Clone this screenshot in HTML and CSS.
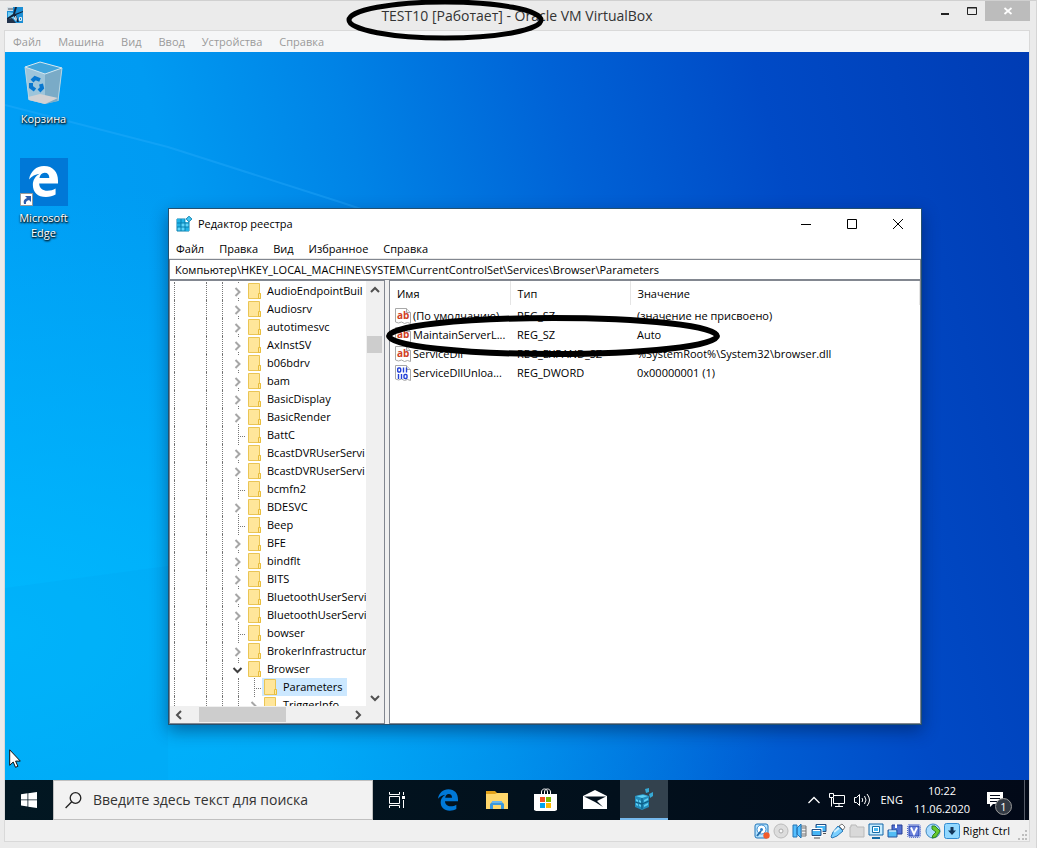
FILE: index.html
```html
<!DOCTYPE html>
<html lang="ru">
<head>
<meta charset="utf-8">
<title>TEST10 [Работает] - Oracle VM VirtualBox</title>
<link rel="stylesheet" href="styles.css">
</head>
<body>
<svg class="defs" aria-hidden="true">
  <symbol id="folder" viewBox="0 0 13 16"><path d="M.5 .5h11v10h1v5H.5z" fill="#ffe69a" stroke="#eac555"/><path d="M10.500 15.500v-5h2v5z" fill="#ffe9a2" stroke="#e8bd3c"/></symbol>
  <symbol id="closed" viewBox="0 0 16 18"><path d="M8.500 0v2M8.500 16v2" stroke="#777" stroke-dasharray="1 1"/><path d="M5.500 6l4 4-4 4" fill="none" stroke="#a6a6a6" stroke-width="2"/></symbol>
  <symbol id="leaf" viewBox="0 0 16 18"><path d="M8.500 0v18M8 10.500h8" stroke="#777" stroke-dasharray="1 1"/></symbol>
  <symbol id="opened" viewBox="0 0 16 18"><path d="M8.500 0v3" stroke="#777" stroke-dasharray="1 1"/><path d="M3.500 8l4 4 4-4" fill="none" stroke="#404040" stroke-width="2"/></symbol>
  <symbol id="page" viewBox="0 0 16 16"><path d="M.5 .5h11l4 4v11l-3-1-3 1-3-1.500-3 1-3-1z" fill="#fff" stroke="#a8a8a8"/><path d="M11.500 .5v4h4" fill="#eee" stroke="#a8a8a8"/></symbol>
  <symbol id="bits" viewBox="0 0 16 16"><use href="#page"/><g fill="none" stroke="#2340d8" stroke-width="1.400"><rect x="2.700" y="3" width="3" height="4" rx="1"/><path d="M8.500 2.500v5M11.500 2.500v5M3.500 9v5M6.500 9v5"/><rect x="9" y="9.500" width="3" height="4" rx="1"/></g></symbol>
  <symbol id="cubes" viewBox="0 0 16 16"><path d="M1 3h12v12H1z" fill="#5fd5fb" stroke="#087fae"/><path d="M1 3h8v4H5v4H1zM9 11h4v4H9z" fill="#21b2e6"/><path d="M1 7h12M1 11h12M5 3v12M9 3v12" stroke="#087fae"/><path d="M9.500 2h4v4h-4z" fill="#fff"/><path d="M13 .2L15.800 3 13 5.800 10.200 3z" fill="#46c8f4" stroke="#087fae"/></symbol>
  <symbol id="edge" viewBox="0 0 30 32"><path fill="currentColor" fill-rule="evenodd" d="M0 14C1.500 5.500 7.500 0 15.500 0 25 0 30 6.500 30 15v3H10.500c.2 5 4 7.500 8.500 7.500 3.400 0 6-.8 8.500-2.300v6.300C24.700 31.200 21.500 32 17.500 32 9 32 4 27 4 19.500c0-5 2.500-9 7-11.500C6.500 8.500 3 10.500 0 14zM10.800 12.500H21c0-3.500-1.500-5.500-4.800-5.500-3.100 0-4.900 2.400-5.400 5.500z"/></symbol>
</svg>

<main class="vm">
  <header class="vm-title">
    <svg class="vm-logo" viewBox="0 0 16 16"><path fill="#1c8fd5" d="M0 0h16v16H0z"/><path fill="#6fcdf5" d="M1 5l6 1v5L3 13 1 10z"/><path fill="#14253c" d="M8 0h2L8 7l8-3v1l-7 3 3 7h-2L7 9l-7 4v-2l6-4z"/><path fill="#22334b" d="M0 12l5-1 4 5H0z"/><path fill="#d5e0e8" d="M0 0h6v4H0z"/><path fill="none" stroke="#4b5964" d="M1 2h1M3 1v2M5 1v2"/><path fill="none" stroke="#e5edf2" d="M9 9l-2 3h3M9 10v4M12.500 10.500h2v3h-2z"/></svg>
    <h1>TEST10 [Работает] - Oracle VM VirtualBox</h1>
    <div class="vm-buttons">
      <button type="button" aria-label="Свернуть"><svg viewBox="0 0 10 10"><path d="M1 8h8" stroke="#222" stroke-width="2"/></svg></button>
      <button type="button" aria-label="Развернуть"><svg viewBox="0 0 10 10"><path d="M.5 1.500h9v7h-9zM0 2h10" fill="none" stroke="#222"/></svg></button>
      <button type="button" class="vm-close" aria-label="Закрыть"><svg viewBox="0 0 10 10"><path d="M1.500 2l7 6M8.500 2l-7 6" stroke="#fff" stroke-width="1.700"/></svg></button>
    </div>
  </header>

  <div class="frame">
    <nav class="vm-menu"><button type="button">Файл</button><button type="button">Машина</button><button type="button">Вид</button><button type="button">Ввод</button><button type="button">Устройства</button><button type="button">Справка</button></nav>

    <section class="desktop">
      <svg class="rays" viewBox="0 0 1024 728" preserveAspectRatio="none" aria-hidden="true"><path d="M0 53L163 95 335 150 500 205" fill="none" stroke="#35b4ff" stroke-opacity=".3" stroke-width="2"/><path d="M0 536L163 514V728H0z" fill="#0098ee" fill-opacity=".15"/></svg>
      <div class="shortcuts">
        <a href="#" class="shortcut"><svg class="bin" viewBox="0 0 40 44"><path d="M1 6L16 1l22 6-4 33-13 3-16-4z" fill="#88bddb"/><path d="M1 6l20 7v30L5 39z" fill="#9dc5db"/><path d="M38 7l-17 6v30l13-3z" fill="#7aabc7"/><path d="M4 36l12-3 18 4-13 6-16-4z" fill="#d2d2d4"/><path d="M1 6L16 1l22 6-17 6z" fill="#41a5dc" stroke="#d3e7f0"/><path d="M1 6l4 33M38 7l-4 33" stroke="#b7d6e4"/><g fill="none" stroke="#0878d0" stroke-width="4"><path d="M8 20l3-3 5 2M17 23l1 4-3 3M11 29l-4-3 0-4"/></g></svg><span>Корзина</span></a>
        <a href="#" class="shortcut"><svg class="edge-tile" viewBox="0 0 48 48"><path fill="#0078d7" d="M0 0h48v48H0z"/><use href="#edge" x="9" y="8" width="29" height="31" color="#fff"/><path fill="#fff" stroke="#999" d="M.5 35.500h12v12H.5z"/><path d="M4 46c-1-3 0-5 3-6L5 38h6v6l-2-2c-3 1-3 2-3 4z" fill="#2c5dad"/></svg><span>Microsoft Edge</span></a>
      </div>

      <section class="regedit">
        <header class="reg-title">
          <svg class="reg-icon"><use href="#cubes"/></svg><h2>Редактор реестра</h2>
          <div class="reg-buttons">
            <button type="button" aria-label="Свернуть"><svg viewBox="0 0 10 10"><path d="M0 5.500h10" stroke="#000"/></svg></button>
            <button type="button" aria-label="Развернуть"><svg viewBox="0 0 10 10"><path d="M.5 .5h9v9h-9z" fill="none" stroke="#000"/></svg></button>
            <button type="button" aria-label="Закрыть"><svg viewBox="0 0 10 10"><path d="M0 0l10 10M10 0L0 10" stroke="#000"/></svg></button>
          </div>
        </header>
        <nav class="reg-menu"><button type="button">Файл</button><button type="button">Правка</button><button type="button">Вид</button><button type="button">Избранное</button><button type="button">Справка</button></nav>
        <input class="address" aria-label="Путь" value="Компьютер\HKEY_LOCAL_MACHINE\SYSTEM\CurrentControlSet\Services\Browser\Parameters">
        <div class="panes">
          <div class="tree">
            <ul class="keys">
              <li><i></i><i></i><i></i><svg class="exp"><use href="#closed"/></svg><svg class="fold"><use href="#folder"/></svg><span>AudioEndpointBuil</span></li>
              <li><i></i><i></i><i></i><svg class="exp"><use href="#closed"/></svg><svg class="fold"><use href="#folder"/></svg><span>Audiosrv</span></li>
              <li><i></i><i></i><i></i><svg class="exp"><use href="#closed"/></svg><svg class="fold"><use href="#folder"/></svg><span>autotimesvc</span></li>
              <li><i></i><i></i><i></i><svg class="exp"><use href="#closed"/></svg><svg class="fold"><use href="#folder"/></svg><span>AxInstSV</span></li>
              <li><i></i><i></i><i></i><svg class="exp"><use href="#closed"/></svg><svg class="fold"><use href="#folder"/></svg><span>b06bdrv</span></li>
              <li><i></i><i></i><i></i><svg class="exp"><use href="#closed"/></svg><svg class="fold"><use href="#folder"/></svg><span>bam</span></li>
              <li><i></i><i></i><i></i><svg class="exp"><use href="#closed"/></svg><svg class="fold"><use href="#folder"/></svg><span>BasicDisplay</span></li>
              <li><i></i><i></i><i></i><svg class="exp"><use href="#closed"/></svg><svg class="fold"><use href="#folder"/></svg><span>BasicRender</span></li>
              <li><i></i><i></i><i></i><svg class="exp"><use href="#leaf"/></svg><svg class="fold"><use href="#folder"/></svg><span>BattC</span></li>
              <li><i></i><i></i><i></i><svg class="exp"><use href="#closed"/></svg><svg class="fold"><use href="#folder"/></svg><span>BcastDVRUserServi</span></li>
              <li><i></i><i></i><i></i><svg class="exp"><use href="#closed"/></svg><svg class="fold"><use href="#folder"/></svg><span>BcastDVRUserServi</span></li>
              <li><i></i><i></i><i></i><svg class="exp"><use href="#leaf"/></svg><svg class="fold"><use href="#folder"/></svg><span>bcmfn2</span></li>
              <li><i></i><i></i><i></i><svg class="exp"><use href="#closed"/></svg><svg class="fold"><use href="#folder"/></svg><span>BDESVC</span></li>
              <li><i></i><i></i><i></i><svg class="exp"><use href="#leaf"/></svg><svg class="fold"><use href="#folder"/></svg><span>Beep</span></li>
              <li><i></i><i></i><i></i><svg class="exp"><use href="#closed"/></svg><svg class="fold"><use href="#folder"/></svg><span>BFE</span></li>
              <li><i></i><i></i><i></i><svg class="exp"><use href="#closed"/></svg><svg class="fold"><use href="#folder"/></svg><span>bindflt</span></li>
              <li><i></i><i></i><i></i><svg class="exp"><use href="#closed"/></svg><svg class="fold"><use href="#folder"/></svg><span>BITS</span></li>
              <li><i></i><i></i><i></i><svg class="exp"><use href="#closed"/></svg><svg class="fold"><use href="#folder"/></svg><span>BluetoothUserServi</span></li>
              <li><i></i><i></i><i></i><svg class="exp"><use href="#closed"/></svg><svg class="fold"><use href="#folder"/></svg><span>BluetoothUserServi</span></li>
              <li><i></i><i></i><i></i><svg class="exp"><use href="#leaf"/></svg><svg class="fold"><use href="#folder"/></svg><span>bowser</span></li>
              <li><i></i><i></i><i></i><svg class="exp"><use href="#closed"/></svg><svg class="fold"><use href="#folder"/></svg><span>BrokerInfrastructur</span></li>
              <li><i></i><i></i><i></i><svg class="exp"><use href="#opened"/></svg><svg class="fold"><use href="#folder"/></svg><span>Browser</span></li>
              <li class="sub"><i></i><i></i><i></i><i></i><svg class="exp"><use href="#leaf"/></svg><b><svg class="fold"><use href="#folder"/></svg><span>Parameters</span></b></li>
              <li class="sub"><i></i><i></i><i></i><i></i><svg class="exp"><use href="#closed"/></svg><svg class="fold"><use href="#folder"/></svg><span>TriggerInfo</span></li>
            </ul>
            <div class="vbar"><svg viewBox="0 0 10 8"><path d="M1 6l4-4 4 4" /></svg><div class="vthumb"></div><svg viewBox="0 0 10 8"><path d="M1 2l4 4 4-4"/></svg></div>
            <div class="hbar"><svg viewBox="0 0 8 10"><path d="M6 1L2 5l4 4"/></svg><div class="hthumb"></div><svg viewBox="0 0 8 10"><path d="M2 1l4 4-4 4"/></svg></div>
          </div>
          <div class="values">
            <table>
              <thead><tr><th class="c-name">Имя</th><th class="c-type">Тип</th><th>Значение</th></tr></thead>
              <tbody>
                <tr><td><div class="name"><svg class="kind" viewBox="0 0 16 16"><use href="#page"/><text x="2" y="11">ab</text></svg><span>(По умолчанию)</span></div></td><td>REG_SZ</td><td>(значение не присвоено)</td></tr>
                <tr><td><div class="name"><svg class="kind" viewBox="0 0 16 16"><use href="#page"/><text x="2" y="11">ab</text></svg><span>MaintainServerL...</span></div></td><td>REG_SZ</td><td>Auto</td></tr>
                <tr><td><div class="name"><svg class="kind" viewBox="0 0 16 16"><use href="#page"/><text x="2" y="11">ab</text></svg><span>ServiceDll</span></div></td><td>REG_EXPAND_SZ</td><td>%SystemRoot%\System32\browser.dll</td></tr>
                <tr><td><div class="name"><svg class="kind"><use href="#bits"/></svg><span>ServiceDllUnloa...</span></div></td><td>REG_DWORD</td><td>0x00000001 (1)</td></tr>
              </tbody>
            </table>
          </div>
        </div>
      </section>

      <svg class="cursor" viewBox="0 0 12 19"><path d="M.7 .8v15.500l3.500-3.300 2.300 5.300 2.400-1-2.300-5.200h4.700z" fill="#fff" stroke="#111"/></svg>
    </section>

    <footer class="taskbar">
      <button type="button" class="start" aria-label="Пуск"><svg viewBox="0 0 16 16"><path fill="#fff" d="M0 2.200l6.500-.9v6.200H0zM7.300 1.200L16 0v7.500H7.300zM0 8.300h6.500v6.200L0 13.600zM7.300 8.300H16V16l-8.700-1.200z"/></svg></button>
      <label class="search"><svg viewBox="0 0 17 17"><circle cx="10.500" cy="6" r="5.300" fill="none" stroke="#222" stroke-width="1.300"/><path d="M6.700 9.800L.6 16" stroke="#222" stroke-width="1.300"/></svg><input type="text" placeholder="Введите здесь текст для поиска" aria-label="Поиск"></label>
      <button type="button" class="view" aria-label="Представление задач"><svg viewBox="0 0 16 16"><path d="M.5 0v2.500h10V0M.5 16v-2.500h10V16M.5 4.500h10v7H.5zM14.500 0v3M14.500 8v8" fill="none" stroke="#fff"/><path fill="#fff" d="M13 4h3v3h-3z"/></svg></button>
      <div class="apps">
        <button type="button" aria-label="Microsoft Edge"><svg width="20" height="22" color="#0078d7"><use href="#edge"/></svg></button>
        <button type="button" aria-label="Проводник"><svg width="22" height="18" viewBox="0 0 22 18"><path fill="#e3a21a" d="M0 0h9l2 2h11v4H0z"/><path fill="#ffd76b" d="M0 3h9l2-1h11v16H0z"/><path fill="#3c98dc" d="M4 18v-5l3-3h8l3 3v5h-3v-4H7v4z"/><path fill="#69b7ef" d="M6 10h10v2H6z"/></svg></button>
        <button type="button" aria-label="Store"><svg width="24" height="24" viewBox="0 0 24 24"><path d="M7.500 7V4c0-4 6-4 6 0v3M10.500 7V4c0-4 6-4 6 0v3" fill="none" stroke="#fff"/><path fill="#fff" d="M0 6h23v16l-2 1H2l-2-1z"/><path fill="#f25022" d="M6 9h5v5H6z"/><path fill="#7fba00" d="M12 9h5v5h-5z"/><path fill="#00a4ef" d="M6 15h5v5H6z"/><path fill="#ffb900" d="M12 15h5v5h-5z"/></svg></button>
        <button type="button" aria-label="Почта"><svg width="24" height="20" viewBox="0 0 24 20"><path d="M0 6L12 0l12 6v13H0z" fill="#fff"/><path d="M1 6.500h22L14 11l6 6-8-5z" fill="#02101c"/></svg></button>
        <button type="button" class="active" aria-label="Редактор реестра"><svg width="20" height="22" viewBox="0 0 20 22"><path fill="#238cbc" d="M1 8l8-2 6 2v11l-7 3-7-3z"/><path fill="#5fd0f3" d="M2 8l7-1 5 1-6 2zM2 11l2 1v2l-2-1zM5 12l2 1v2l-2-1zM2 15l2 1v2l-2-1zM5 16l2 1v2l-2-1zM10 12l4-2v2l-4 2zM10 17l4-2v2l-4 2z"/><path d="M11 1l4-1v4l-3 1zM15 6l4-2v4l-3 2z" fill="#36a9d5"/><path d="M8 10v11M1 14l7 2 7-3" fill="none" stroke="#0c597f"/></svg></button>
      </div>
      <div class="tray">
        <svg width="12" height="8" viewBox="0 0 12 8"><path d="M.5 7L6 1.500 11.500 7" fill="none" stroke="#fff" stroke-width="1.300"/></svg>
        <svg width="16" height="14" viewBox="0 0 16 14"><path d="M5 2.500h10.500v8H4.500V5M10 10.500v3M6 13.500h8M.5 .5h4v4h-4zM2.500 4.500v9" fill="none" stroke="#fff"/></svg>
        <svg width="17" height="14" viewBox="0 0 17 14"><path d="M.5 4.500h2l3-3v11l-3-3h-2zM8 5q1.500 2 0 4M10.500 3q3 4 0 8M13 1q5 6 0 12" fill="none" stroke="#fff"/></svg>
        <span>ENG</span>
        <time>10:22<br>11.06.2020</time>
        <button type="button" class="notice" aria-label="Уведомления"><svg viewBox="0 0 16 16"><path fill="#fff" d="M0 0h16v12H6l-3 3v-3H0z"/><path d="M3 3.500h10M3 6.500h10M3 9.500h7" stroke="#02091a"/></svg><span>1</span></button>
        <span class="peek"></span>
      </div>
    </footer>

    <footer class="status">
      <svg viewBox="0 0 16 16"><rect x="1" y="1" width="13" height="14" rx="2" fill="#b7e4ff" stroke="#2075b9"/><circle cx="7.500" cy="6.500" r="4.500" fill="#fff" stroke="#398bd0"/><circle cx="7.500" cy="6.500" r="1.500" fill="#277cc5"/><path d="M7 8l-4 5" stroke="#246ca8" stroke-width="2"/><circle cx="12.500" cy="12.500" r="3.200" fill="#f15a2a"/></svg>
      <svg viewBox="0 0 16 16"><circle cx="8" cy="8" r="7" fill="#ddd" stroke="#bbb"/><circle cx="8" cy="8" r="2" fill="#f8f8f8" stroke="#aaa"/></svg>
      <svg viewBox="0 0 16 16"><path d="M9 3h5v10H9z" fill="#eee" stroke="#777"/><path d="M10 5h4M10 8h4M10 11h4" stroke="#777"/><path d="M1 2h4v12H1zM5 5l4-4v14l-4-4z" fill="#55bfff" stroke="#2474b4"/></svg>
      <svg viewBox="0 0 16 16"><path d="M5 1.500h10v7H5z" fill="#48b6f5" stroke="#244e82"/><path d="M6 2.500h8" stroke="#fff"/><path d="M1 6.500h9v6H1z" fill="#48b6f5" stroke="#fff" stroke-width="3"/><path d="M1 6.500h9v6H1z" fill="#48b6f5" stroke="#244e82"/><path d="M2 7.500h7" stroke="#fff"/><path d="M3 15h6M12 10.500h3" stroke="#555"/></svg>
      <svg viewBox="0 0 16 16"><path d="M9 3l3-2 3 3-2 3z" fill="#fff" stroke="#777"/><path d="M8 3l5 5-6 5-5 2-1-1 2-5z" fill="#7bd0ff" stroke="#2b79b8"/><path d="M4 9l5-4" stroke="#d5f2ff" stroke-width="2"/></svg>
      <svg viewBox="0 0 16 16"><path d="M1 4h1V2h5l1 2h7v10H1z" fill="#d9d9d9" stroke="#b9b9b9"/></svg>
      <svg viewBox="0 0 16 16"><path d="M1 1h14v11H1z" fill="#c8edff" stroke="#1266a8"/><path d="M4.500 3.500h7v6h-7z" fill="#fff" stroke="#176ca5"/><path d="M6 5h4v3H6z" fill="#48baf3"/><path d="M4 15h8" stroke="#176ca5" stroke-width="2"/></svg>
      <svg viewBox="0 0 16 16"><path d="M5 2h10v9H5z" fill="#5371d3" stroke="#263e95"/><path d="M8 1h2v4H8z" fill="#fff"/><path d="M1 7h9v7H1z" fill="#52bdf5" stroke="#26549b"/><path d="M2 8h7" stroke="#fff"/></svg>
      <svg viewBox="0 0 16 16"><rect x="1.500" y="1.500" width="13" height="13" rx="2" fill="#e5eaff" stroke="#4a63c4" stroke-dasharray="1 1"/><path d="M3 3h10v10H3z" fill="#6a80dc" stroke="#2442ae"/><path d="M5 4.500l3 6.500 3-6.500" fill="none" stroke="#fff" stroke-width="1.800"/></svg>
      <svg viewBox="0 0 16 16"><circle cx="8" cy="8" r="7" fill="#a9dcff" stroke="#4088bd"/><path d="M7 3l3 0 5 5-4 6-4 1 1-3 3-3-4-3z" fill="#68c92f" stroke="#2f8220"/></svg>
      <svg viewBox="0 0 16 16"><rect x=".5" y=".5" width="15" height="15" rx="2" fill="#92d8ff" stroke="#328bd0"/><path d="M6.500 4h3v3.500h2.500L8 12 4 7.500h2.500z" fill="#133559"/></svg>
      <span>Right Ctrl</span>
      <svg class="grip" viewBox="0 0 10 10"><path fill="#bdbdbd" d="M7 0h2v2H7zM4 4h2v2H4zM7 4h2v2H7zM0 8h2v2H0zM4 8h2v2H4zM7 8h2v2H7z"/></svg>
    </footer>
  </div>
</main>

<svg class="mark mark-title" viewBox="0 0 198 44" aria-hidden="true"><ellipse cx="99" cy="20" rx="96" ry="18"/></svg>
<svg class="mark mark-row" viewBox="0 0 334 42" aria-hidden="true"><ellipse cx="167" cy="21" rx="164" ry="18"/></svg>
</body>
</html>
```
FILE: styles.css
```css
* { box-sizing: border-box; }
body { margin: 0; position: relative; font: 11px/18px "Open Sans", "Noto Sans", sans-serif; color: #000; }
button, input { font: inherit; color: inherit; border: 0; padding: 0; margin: 0; background: none; }
h1, h2, ul { margin: 0; padding: 0; font-weight: 400; }
svg { display: block; flex: none; }
.defs { position: absolute; width: 0; height: 0; }

.vm { height: 100vh; display: flex; flex-direction: column; background: #ebebeb; padding: 0 6px 6px 4px; border-top: 1px solid #d0d0d0; border-right: 1px solid #d5d5d5; }
.vm-title { height: 29px; flex: none; display: grid; grid-template-columns: 106px 1fr 106px; }
.vm-logo { width: 16px; height: 16px; margin: 6px 3px; }
.vm-title h1 { text-align: center; font-size: 14px; line-height: 30px; color: #333; white-space: nowrap; }
.vm-buttons { display: flex; height: 20px; justify-content: flex-end; }
.vm-buttons button { width: 27px; display: grid; place-items: center; }
.vm-buttons svg { width: 10px; height: 10px; }
.vm-buttons .vm-close { width: 45px; background: #bcbcbc; }

.frame { flex: 1; min-height: 0; display: flex; flex-direction: column; border: 1px solid #d9d9d9; }
.vm-menu { height: 21px; flex: none; display: flex; gap: 17px; padding-left: 8px; background: #f5f6f7; color: #9b9b9b; line-height: 21px; }
.desktop { flex: 1; position: relative; overflow: hidden; background: radial-gradient(ellipse at 0% 80%, rgba(0,190,255,.8), rgba(0,190,255,0) 55%), linear-gradient(76deg, #00a2f8 0%, #009bf2 26%, #0083e6 42%, #0062d6 60%, #004ac6 77%, #003cb4 100%); }
.rays { position: absolute; inset: 0; width: 100%; height: 100%; }
.shortcuts { position: relative; width: 77px; padding-top: 8px; display: flex; flex-direction: column; gap: 32px; }
.shortcut { display: flex; flex-direction: column; align-items: center; gap: 4px; padding: 0 8px; color: #fff; text-decoration: none; text-align: center; line-height: 15px; text-shadow: 1px 1px 2px #000, 0 1px 2px #000; }
.bin { width: 40px; height: 44px; margin: 1px 0 2px; }
.edge-tile { width: 48px; height: 48px; }
.cursor { position: absolute; left: 4px; bottom: 12px; width: 12px; height: 19px; }

.regedit { position: absolute; left: 163px; top: 156px; width: 754px; height: 517px; display: flex; flex-direction: column; background: #fff; border: 1px solid #24506f; box-shadow: 0 6px 16px rgba(0,20,60,.45); }
.reg-title { height: 30px; flex: none; display: flex; align-items: center; padding-left: 7px; }
.reg-icon { width: 16px; height: 16px; }
.reg-title h2 { font-size: 11px; margin-left: 6px; flex: 1; }
.reg-buttons { display: flex; }
.reg-buttons button { width: 46px; height: 29px; display: grid; place-items: center; }
.reg-buttons svg { width: 10px; height: 10px; }
.reg-menu { height: 20px; flex: none; display: flex; gap: 15px; padding-left: 7px; line-height: 20px; border-bottom: 1px solid #e8e8e8; }
.address { height: 21px; flex: none; width: 100%; border: 1px solid #828790; padding: 0 5px; background: #fff; }
.panes { flex: 1; min-height: 0; display: grid; grid-template-columns: 216px 1fr; gap: 4px; background: #f0f0f0; }
.tree { min-width: 0; min-height: 0; display: grid; grid-template-columns: minmax(0, 1fr) 18px; grid-template-rows: minmax(0, 1fr) 17px; border: 1px solid #828790; background: #fff; }
.keys { list-style: none; overflow: hidden; padding-top: 1px; }
.keys li { height: 18px; display: flex; align-items: center; white-space: nowrap; padding-left: 4px; }
.keys i { width: 32px; height: 18px; flex: none; border-left: 1px dotted #777; }
.keys i + i { width: 16px; }
.keys i + i + i { width: 8px; }
.sub i + i + i { width: 16px; }
.sub i + i + i + i { width: 8px; }
.exp { width: 16px; height: 18px; }
.fold { width: 13px; height: 16px; margin: 0 6px 0 2px; }
.keys b { font-weight: 400; height: 18px; display: flex; align-items: center; background: #cce8ff; padding-right: 4px; }
.vbar { background: #f0f0f0; display: grid; grid-template-rows: 17px 38px 17px 1fr 17px; justify-items: center; align-items: center; padding-right: 1px; }
.vbar svg { width: 10px; height: 8px; }
.vbar svg:last-child { grid-row: 5; }
.vthumb { grid-row: 3; width: 15px; height: 17px; background: #cdcdcd; }
.vbar path, .hbar path { fill: none; stroke: #505050; stroke-width: 2; }
.hbar { grid-column: 1 / 3; background: #f0f0f0; display: grid; grid-template-columns: 17px 12px 87px 1fr 17px 18px; align-items: center; justify-items: center; }
.hbar svg { width: 8px; height: 10px; }
.hbar svg:last-child { grid-column: 5; }
.hthumb { grid-column: 3; width: 87px; height: 15px; background: #cdcdcd; }
.values { border: 1px solid #828790; background: #fff; min-width: 0; }
table { width: 100%; border-collapse: collapse; table-layout: fixed; line-height: 19px; }
th { height: 24px; text-align: left; font-weight: 400; padding: 1px 6px 0 7px; border-right: 1px solid #e5e5e5; }
td { height: 19px; padding: 0 6px 0 7px; white-space: nowrap; }
.c-name, .c-type { width: 120px; }
.name { display: flex; align-items: center; gap: 2px; margin: 0 -4px 0 -2px; }
.kind { width: 16px; height: 16px; }
.kind text { font: 700 10px "Open Sans", sans-serif; fill: #d0401f; }
tbody::before { content: ""; display: block; height: 1px; }

.taskbar { height: 40px; flex: none; display: flex; background: linear-gradient(90deg, #021722, #02101c 60%, #020918); color: #fff; }
.taskbar button { width: 48px; display: grid; place-items: center; }
.start svg { width: 16px; height: 16px; }
.search { width: 320px; display: flex; align-items: center; background: #f2f2f2; border: 1px solid #c0c0c0; padding-left: 11px; gap: 11px; }
.search svg { width: 17px; height: 17px; }
.search input { flex: 1; min-width: 0; font-size: 14px; color: #222; }
.search input::placeholder { color: #333; opacity: 1; }
.view svg { width: 16px; height: 16px; }
.apps { display: flex; gap: 1px; margin-left: 3px; }
.apps .active { background: #33424e; border-bottom: 2px solid #76b9ed; }
.tray { margin-left: auto; display: flex; align-items: center; gap: 9px; }
.tray time { text-align: center; margin-left: 2px; }
.taskbar .notice { position: relative; width: 36px; height: 40px; padding-right: 4px; }
.notice svg { width: 16px; height: 16px; }
.notice span { position: absolute; left: 16px; top: 18px; width: 17px; height: 17px; border: 1px solid #999; border-radius: 50%; background: #333a44; line-height: 15px; }
.peek { width: 5px; height: 40px; border-left: 1px solid #555b68; }
.status { height: 21px; flex: none; display: flex; justify-content: flex-end; align-items: center; gap: 3px; background: #f0f0f0; }
.status svg { width: 16px; height: 16px; }
.status .grip { width: 10px; height: 10px; margin: 8px 1px 0 5px; }

.mark { position: absolute; overflow: visible; pointer-events: none; }
.mark ellipse { fill: none; stroke: #000; stroke-width: 5; }
.mark-title { left: 346px; top: 0; width: 198px; height: 44px; }
.mark-row { left: 386px; top: 315px; width: 334px; height: 42px; }
.mark-row ellipse { stroke-width: 6; }
```
